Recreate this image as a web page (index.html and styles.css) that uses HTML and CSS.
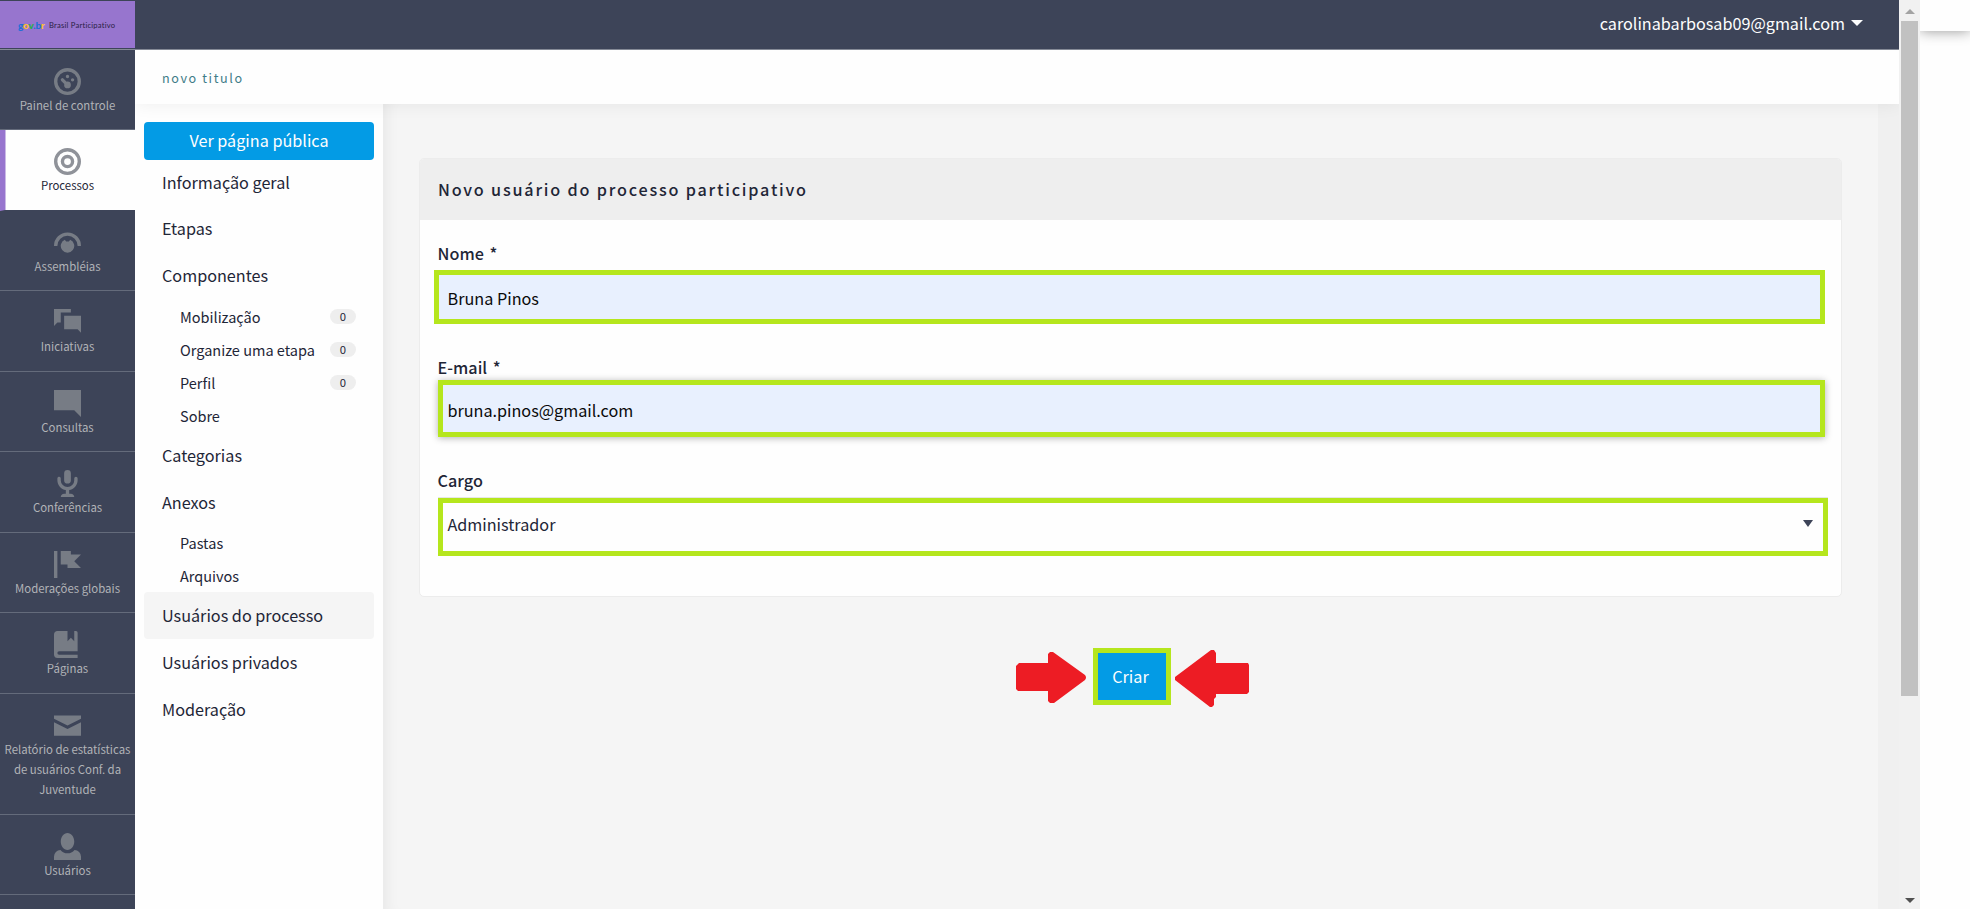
FILE: index.html
```html
<!DOCTYPE html>
<html lang="pt-BR">
<head>
<meta charset="utf-8">
<title>Brasil Participativo</title>
<link rel="stylesheet" href="styles.css">
</head>
<body>
<div class="app">
  <aside class="sidebar">
    <div class="logo"><span class="govbr"><b class="blue">g</b><b class="yellow">o</b><b class="green">v</b><b class="blue">.b</b><b class="yellow">r</b></span><span class="brand">Brasil Participativo</span></div>
    <nav class="mainnav">
      <a class="item"><svg viewBox="0 0 8 8"><path d="M4 0a4 4 0 1 0 0 8 4 4 0 0 0 0-8zm0 1a3 3 0 1 1 0 6 3 3 0 0 1 0-6zm0 1a.5.5 0 1 0 0 1 .5.5 0 0 0 0-1zm-1.660 1a.5.5 0 0 0-.19.84l.91.91c-.02.08-.06.16-.06.25a1 1 0 1 0 2 0 1 1 0 0 0-1-1c-.09 0-.17.04-.25.06l-.91-.91a.5.5 0 0 0-.5-.15zM5.500 3a.5.5 0 1 0 0 1 .5.5 0 0 0 0-1z"/></svg><span>Painel de controle</span></a>
      <a class="item active"><svg viewBox="0 0 8 8"><path d="M4 0a4 4 0 1 0 0 8 4 4 0 0 0 0-8zm0 1a3 3 0 1 1 0 6 3 3 0 0 1 0-6zm0 1a2 2 0 1 0 0 4 2 2 0 0 0 0-4zm0 1a1 1 0 1 1 0 2 1 1 0 0 1 0-2z"/></svg><span>Processos</span></a>
      <a class="item"><svg viewBox="0 0 8 8"><path d="M0 5a4 4 0 0 1 8 0H7a3 3 0 0 0-6 0zM3.200 3.170a2 2 0 1 0 1.600 0L4.400 3.700H3.600z"/></svg><span>Assembléias</span></a>
      <a class="item"><svg viewBox="0 0 8 8"><path d="M0 0v5l1-1h1V1h3V0H0zm3 2v4h4l1 1V2H3z"/></svg><span>Iniciativas</span></a>
      <a class="item"><svg viewBox="0 0 8 8"><path d="M0 0v6h6l2 2V0z"/></svg><span>Consultas</span></a>
      <a class="item"><svg viewBox="0 0 8 8"><path d="M4 0a1 1 0 0 0-1 1v2a1 1 0 0 0 2 0V1a1 1 0 0 0-1-1zM1.340 2A.5.5 0 0 0 1 2.500V3c0 1.480 1.090 2.690 2.500 2.940V7H3c-.55 0-1 .45-1 1h4c0-.55-.45-1-1-1h-.5V5.940C5.910 5.690 7 4.480 7 3v-.5a.5.5 0 1 0-1 0V3a2 2 0 1 1-4 0v-.5A.5.5 0 0 0 1.340 2z"/></svg><span>Conferências</span></a>
      <a class="item"><svg viewBox="0 0 8 8"><path d="M0 0v8h1V0H0zm2 0v4h2v1h4L6 3l2-2H5V0H2z"/></svg><span>Moderações globais</span></a>
      <a class="item"><svg viewBox="0 0 8 8"><path d="M1 0C.46 0 0 .46 0 1v6c0 .55.45 1 1 1h6V7H1.500a.5.5 0 1 1 0-1H7V.5A.5.5 0 0 0 6.500 0H6v3L5 2 4 3V0H1z"/></svg><span>Páginas</span></a>
      <a class="item tall"><svg viewBox="0 0 8 8"><path d="M0 1v1l4 2 4-2V1H0zm0 2v4h8V3L4 5 0 3z"/></svg><span>Relatório de estatísticas<br>de usuários Conf. da<br>Juventude</span></a>
      <a class="item"><svg viewBox="0 0 8 8"><path d="M4 0C2.900 0 2 1.120 2 2.500S2.900 5 4 5s2-1.120 2-2.500S5.100 0 4 0zM1.910 5A2 2 0 0 0 0 7v1h8V7a2 2 0 0 0-1.910-2C5.550 5.600 4.810 6 4 6s-1.550-.4-2.090-1z"/></svg><span>Usuários</span></a>
    </nav>
  </aside>
  <main class="main">
    <header class="topbar"><span>carolinabarbosab09@gmail.com</span><i class="caret"></i></header>
    <div class="titlebar">novo titulo</div>
    <div class="body">
      <nav class="subnav">
        <a class="public">Ver página pública</a>
        <a class="link lead">Informação geral</a>
        <a class="link lead">Etapas</a>
        <a class="link lead last">Componentes</a>
        <a class="sub"><span>Mobilização</span><span class="count">0</span></a>
        <a class="sub"><span>Organize uma etapa</span><span class="count">0</span></a>
        <a class="sub"><span>Perfil</span><span class="count">0</span></a>
        <a class="sub"><span>Sobre</span></a>
        <a class="link">Categorias</a>
        <a class="link">Anexos</a>
        <a class="sub"><span>Pastas</span></a>
        <a class="sub"><span>Arquivos</span></a>
        <a class="link current">Usuários do processo</a>
        <a class="link">Usuários privados</a>
        <a class="link">Moderação</a>
      </nav>
      <section class="content">
        <div class="card">
          <h2 class="card-title">Novo usuário do processo participativo</h2>
          <div class="form">
            <label class="label">Nome <span class="star">*</span></label>
            <div class="field name">Bruna Pinos</div>
            <label class="label">E-mail <span class="star">*</span></label>
            <div class="field email">bruna.pinos@gmail.com</div>
            <label class="label">Cargo</label>
            <div class="field role"><span>Administrador</span><i class="arrow"></i></div>
          </div>
        </div>
        <div class="actions">
          <svg class="pointer" width="70" height="51" viewBox="0 0 70 51"><path d="M3 11H32V2L34 0H37L69 23Q71 25.500 69 28L38 51H34L32 49V39H2L0 37V14Z"/></svg>
          <button class="create">Criar</button>
          <svg class="pointer right" width="74" height="57" viewBox="0 0 74 57"><path d="M0 27L36 0H39L41 3V13H73L74 15V42L72 44H41V47L39 49V55L37 57H35L0 30Z"/></svg>
        </div>
      </section>
      <div class="gutter"></div>
    </div>
  </main>
  <div class="scrollbar"><i class="up"></i><div class="thumb"></div><i class="down"></i></div>
  <div class="behind"><div class="behind-top"></div></div>
</div>
</body>
</html>
```

FILE: styles.css
```css
* { box-sizing: border-box; }
body {
  margin: 0;
  overflow: hidden;
  font-family: "Noto Sans CJK SC", "Noto Sans", sans-serif;
  font-size: 16.200px;
  color: #1f2637;
}
.app { display: flex; width: 1970px; height: 909px; overflow: hidden; background: #fefefe; }

/* Sidebar */
.sidebar { width: 135px; flex: none; background: #3d4458; overflow: hidden; }
.logo {
  display: flex; align-items: center; height: 47px; margin-top: 1px; padding-left: 18px; gap: 5px;
  background: #9775ce; white-space: nowrap;
}
.govbr { width: 26px; font: 10px/12px Lato, sans-serif; letter-spacing: -.2px; }
.govbr b { font-weight: 900; }
.blue { color: #1f6fd6; }
.yellow { color: #ffc02e; }
.green { color: #1fae48; }
.brand { font: 7.600px/12px Lato, sans-serif; letter-spacing: .23px; color: #2b2145; }
.mainnav { margin-top: 1px; border-top: 1px solid #858a96; height: 861px; }
.item {
  display: flex; flex-direction: column; align-items: center; height: 80.500px; padding-top: 18px;
  border-bottom: 1px solid #646b7b; color: #b1b3b7; font-size: 11.400px; line-height: 20px;
  text-align: center; white-space: nowrap;
}
.item:first-child { height: 80px; }
.item.tall { height: 121px; }
.item svg { width: 27px; height: 27px; flex: none; fill: #777c85; }
.item.active {
  background: #fefefe; color: #1f2637;
  border-left: 5px solid #9775ce; border-bottom-color: #3d4458; padding-right: 5px;
  box-shadow: inset 1px 0 0 #cbbae6;
}
.item.active svg { fill: #8f9299; }

/* Top area */
.main { width: 1764px; flex: none; display: flex; flex-direction: column; }
.topbar {
  display: flex; align-items: center; justify-content: flex-end; gap: 6px; height: 50px; flex: none;
  padding: 0 36px 3px 0; background: #3d4458; border-bottom: 1px solid #858a96; color: #fefefe;
}
.caret { border: 6px solid transparent; border-top-color: #fefefe; border-bottom: 0; }
.titlebar {
  position: relative; z-index: 1; height: 54px; flex: none; padding-left: 27px; background: #fefefe;
  box-shadow: 0 0 18px rgba(0, 0, 0, .07);
  clip-path: inset(0 0 -20px 0);
  color: #3e7c88; font-size: 12.600px; line-height: 55px; letter-spacing: 1.600px;
}
.body { display: flex; flex: 1; }

/* Process navigation */
.subnav { width: 248px; flex: none; padding: 18px 9px; background: #fefefe; }
.public {
  display: block; height: 38px; border-radius: 4px; background: #039be5; color: #fefefe;
  line-height: 37px; text-align: center;
}
.link { display: block; height: 46.800px; padding-left: 18px; line-height: 46px; border-radius: 4px; }
.link.lead { height: 46.200px; line-height: 44px; }
.link.lead.last { height: 48px; line-height: 46px; }
.link.current { height: 47px; background: #f5f5f5; }
.sub {
  display: flex; align-items: center; justify-content: space-between; height: 33px;
  padding: 0 18px 0 36px; font-size: 14.500px; line-height: 33px;
}
.count {
  width: 26px; height: 15px; border-radius: 8px; background: #eee;
  text-align: center; font-size: 11.300px; line-height: 14px;
}

/* Form */
.content { width: 1495px; padding: 54px 36px 0; background: #f5f5f5; box-shadow: inset 14px 0 14px -10px rgba(0, 0, 0, .055); }
.card { height: 439px; border: 1px solid #ececec; border-radius: 5px; background: #fefefe; overflow: hidden; }
.card-title {
  margin: 0; height: 61px; padding-left: 18px; background: #eee;
  font-size: 16.200px; font-weight: 500; line-height: 61px; letter-spacing: 1.800px;
}
.form { display: flex; flex-direction: column; padding: 20px 13px 0 14px; }
.label { padding-left: 3.600px; height: 30px; line-height: 27px; font-weight: 500; }
.star { padding-left: 2px; }
.field { border: 5px solid #b5e61d; background: #e8f0fe; color: #0a0a0a; white-space: nowrap; }
.name { height: 54px; width: 1391px; padding-left: 8.600px; line-height: 46px; margin-bottom: 30px; }
.email {
  height: 57px; width: 1387px; margin: -4px 0 30px 4px; padding-left: 4.400px; line-height: 51px;
  box-shadow: 0 1px 7px rgba(0, 0, 0, .3);
}
.role {
  display: flex; justify-content: space-between; height: 58px; width: 1390px; margin: 1px 0 0 4px;
  padding: 0 10px 0 4.400px; line-height: 42px; background: #fefefe; color: #1f2637;
  box-shadow: 0 -1px 0 #e6e6e6;
}
.arrow { margin-top: 17px; height: 7px; border: 5px solid transparent; border-top: 7px solid #3d4458; border-bottom: 0; }

/* Submit row */
.actions { display: flex; align-items: flex-start; padding: 51px 0 0 597px; }
.pointer { flex: none; margin-top: 4px; fill: #ed1c24; }
.create {
  width: 78px; height: 57px; margin-left: 7px; padding: 0 3px 2px 0; border: 5px solid #b5e61d;
  background: #039be5; color: #fefefe; font: inherit;
}
.pointer.right { margin: 2px 0 0 4px; }
.gutter { width: 21px; background: #f0f0f0; }

/* Window scrollbar */
.scrollbar {
  display: flex; flex-direction: column; align-items: center; width: 21px; height: 909px; flex: none;
  background: #f1f1f1;
}
.up { margin-top: 9px; border: 5px solid transparent; border-bottom-color: #a3a3a3; border-top: 0; }
.thumb { width: 17px; height: 675px; margin-top: 7px; background: #c1c1c1; }
.down { margin-top: 202px; border: 5px solid transparent; border-top-color: #505050; border-bottom: 0; }
.behind { flex: 1; background: #fefefe; overflow: hidden; }
.behind-top { height: 31px; box-shadow: 0 0 14px rgba(0, 0, 0, .42); }
```
